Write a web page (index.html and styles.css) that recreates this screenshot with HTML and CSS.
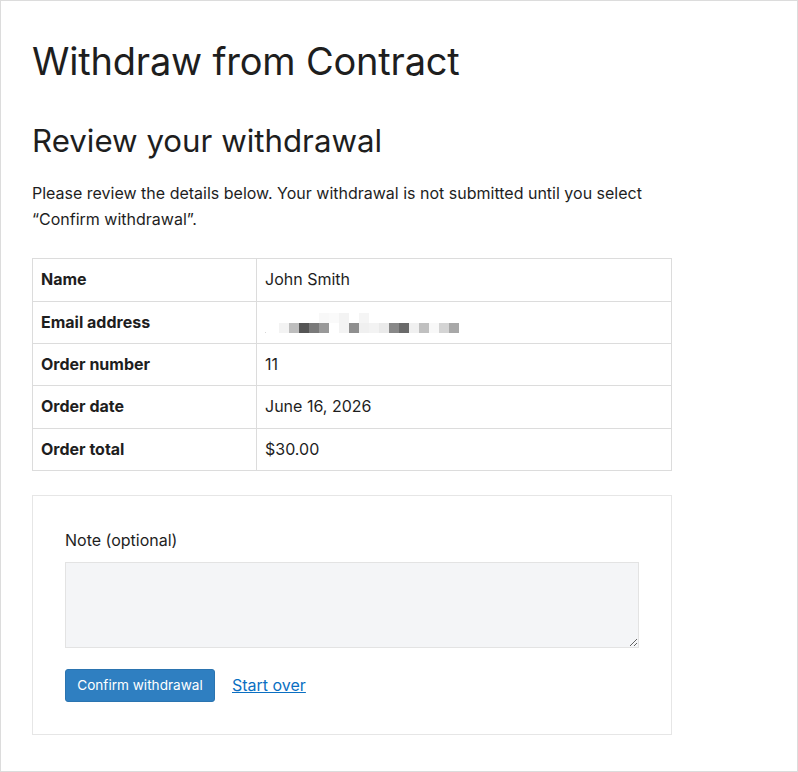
FILE: index.html
```html
<!DOCTYPE html>
<html lang="en">
<head>
<meta charset="utf-8">
<title>Withdraw from Contract</title>
<link rel="stylesheet" href="styles.css">
</head>
<body>
<div class="frame">
  <h1 class="title">Withdraw from Contract</h1>
  <h2 class="subtitle">Review your withdrawal</h2>
  <p class="intro">Please review the details below. Your withdrawal is not submitted until you select “Confirm withdrawal”.</p>
  <table class="details">
    <tbody>
      <tr><th>Name</th><td>John Smith</td></tr>
      <tr><th>Email address</th><td>
        <span class="blur" aria-label="redacted email">
          <span class="dot"></span>
          <span class="pixrow">
            <span class="px"></span><span class="px"></span><span class="px"></span><span class="px"></span><span class="px" style="background:#f8f8f8"></span><span class="px" style="background:#fafafa"></span><span class="px" style="background:#f3f3f3"></span><span class="px"></span><span class="px" style="background:#f5f5f5"></span>
          </span>
          <span class="pixrow">
            <span class="px" style="background:#f3f3f3"></span><span class="px" style="background:#bdbdbd"></span><span class="px" style="background:#555555"></span><span class="px" style="background:#7a7a7a"></span><span class="px" style="background:#999999"></span><span class="px"></span><span class="px" style="background:#f3f3f3"></span><span class="px" style="background:#8f8f8f"></span><span class="px" style="background:#f0f0f0"></span><span class="px" style="background:#f3f3f3"></span><span class="px" style="background:#eaeaea"></span><span class="px" style="background:#888888"></span><span class="px" style="background:#6a6a6a"></span><span class="px" style="background:#f0f0f0"></span><span class="px" style="background:#c0c0c0"></span><span class="px" style="background:#f8f8f8"></span><span class="px" style="background:#d4d4d4"></span><span class="px" style="background:#a8a8a8"></span>
          </span>
        </span>
      </td></tr>
      <tr><th>Order number</th><td>11</td></tr>
      <tr><th>Order date</th><td>June 16, 2026</td></tr>
      <tr><th>Order total</th><td>$30.00</td></tr>
    </tbody>
  </table>
  <form class="panel">
    <label class="field-label" for="note">Note (optional)</label>
    <textarea id="note" class="note"></textarea>
    <div class="actions">
      <button type="button" class="btn-primary">Confirm withdrawal</button>
      <a href="#" class="link">Start over</a>
    </div>
  </form>
</div>
</body>
</html>
```
FILE: styles.css
```css
* { box-sizing: border-box; }
html, body { margin: 0; padding: 0; background: #fff; }
body {
  font-family: Inter, "Noto Sans", "Liberation Sans", sans-serif;
  color: #1e1e1e;
  font-size: 16px;
  line-height: 1.6;
}
.frame {
  width: 798px;
  height: 772px;
  border: 1px solid #dcdcdc;
  padding: 37px 31px 0;
}
.title {
  font-size: 38px;
  font-weight: 400;
  line-height: 46px;
  margin: 0 0 38px;
  letter-spacing: -0.2px;
}
.subtitle {
  font-size: 31.25px;
  font-weight: 400;
  line-height: 38px;
  margin: 0 0 21px;
}
.intro {
  margin: 0 0 26px;
  max-width: 640px;
}
.details {
  width: 640px;
  border-collapse: collapse;
  border: 1px solid #dcdcdc;
  margin: 0 0 24px;
}
.details th, .details td {
  border: 1px solid #dcdcdc;
  padding: 8px;
  text-align: left;
  vertical-align: middle;
  line-height: 25.4px;
}
.details th { width: 224px; font-weight: 700; }
.details td { font-weight: 400; }
.blur {
  position: relative;
  display: inline-block;
  width: 200px;
  height: 20px;
  vertical-align: middle;
}
.pixrow { display: flex; padding-left: 14px; }
.px { width: 10px; height: 10px; background: transparent; }
.dot {
  position: absolute;
  left: 0;
  top: 19px;
  width: 1px;
  height: 1px;
  background: #d8d8d8;
}
.panel {
  width: 640px;
  border: 1px solid #e6e6e6;
  padding: 32px;
}
.field-label { display: block; margin-bottom: 8px; }
.note {
  display: block;
  width: 100%;
  height: 86px;
  background: #f4f5f7;
  border: 1px solid #e3e3e3;
  border-radius: 0;
  margin: 0 0 21px;
  font: inherit;
  resize: both;
}
.actions {
  display: flex;
  align-items: center;
  gap: 17px;
}
.btn-primary {
  width: 150px;
  height: 33px;
  padding: 0;
  font-family: Inter, "Noto Sans", "Liberation Sans", sans-serif;
  font-size: 13.6px;
  color: #fff;
  background: #2f7fc1;
  border: 1px solid #2b74b0;
  border-radius: 3px;
}
.link {
  color: #0a6fc2;
  text-decoration: underline;
  font-size: 16px;
}
```
